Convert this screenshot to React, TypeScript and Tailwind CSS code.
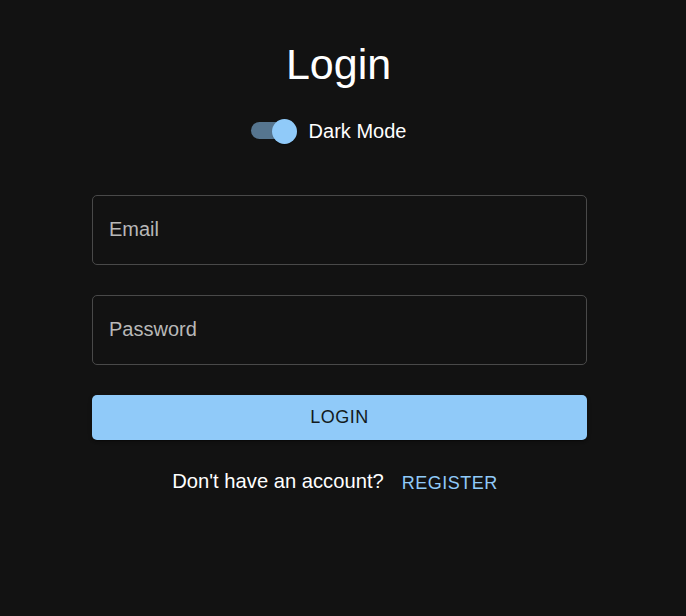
import { useState } from "react";

const DarkSwitch = ({ on, onToggle }: { on: boolean; onToggle: () => void }) => {
  return (
    <button type="button" onClick={onToggle} className="relative w-[46px] h-[25px] shrink-0">
      <span className="absolute left-0 top-[3px] w-[41px] h-[17px] rounded-full bg-[#56758f]" />
      <span
        className={
          on
            ? "absolute right-0 top-0 w-[25px] h-[25px] rounded-full bg-[#90caf9] shadow-[0_2px_1px_-1px_rgba(0,0,0,0.2),0_1px_1px_0_rgba(0,0,0,0.14)]"
            : "absolute left-0 top-0 w-[25px] h-[25px] rounded-full bg-[#e0e0e0]"
        }
      />
    </button>
  );
};

export default function App() {
  const [dark, setDark] = useState(true);

  return (
    <div className="min-h-screen bg-[#121212] font-['Liberation_Sans',Arial,sans-serif]">
      <div className="ml-[92px] w-[495px] pt-[40px] flex flex-col">
        <h1 className="text-center text-[43px] leading-[48px] text-white pr-[2px]">Login</h1>

        <div className="mt-[20px] h-[46px] flex items-center justify-center pr-[22px] gap-[12px]">
          <DarkSwitch on={dark} onToggle={() => setDark(!dark)} />
          <span className="text-[20px] leading-[23px] text-white">Dark Mode</span>
        </div>

        <input
          type="email"
          placeholder="Email"
          className="mt-[41px] h-[70px] w-full rounded-[5px] border border-[#494949] bg-transparent px-[16px] pb-[2px] text-[20px] text-white placeholder:text-[#b8b8b8] outline-none"
        />
        <input
          type="password"
          placeholder="Password"
          className="mt-[30px] h-[70px] w-full rounded-[5px] border border-[#494949] bg-transparent px-[16px] pb-[2px] text-[20px] text-white placeholder:text-[#b8b8b8] outline-none"
        />

        <button
          type="button"
          className="mt-[30px] h-[45px] w-full rounded-[5px] bg-[#90caf9] text-[18px] uppercase tracking-[0.5px] text-[#131a20] shadow-[0_3px_1px_-2px_rgba(0,0,0,0.2),0_2px_2px_0_rgba(0,0,0,0.14),0_1px_5px_0_rgba(0,0,0,0.12)]"
        >
          Login
        </button>

        <div className="mt-[26px] h-[30px] flex items-center justify-center gap-[9px]">
          <span className="text-[20.2px] leading-[23px] text-white">Don't have an account?</span>
          <button type="button" className="mt-[5px] px-[9px] text-[18px] leading-[21px] uppercase tracking-[0.5px] text-[#90caf9]">
            Register
          </button>
        </div>
      </div>
    </div>
  );
}
